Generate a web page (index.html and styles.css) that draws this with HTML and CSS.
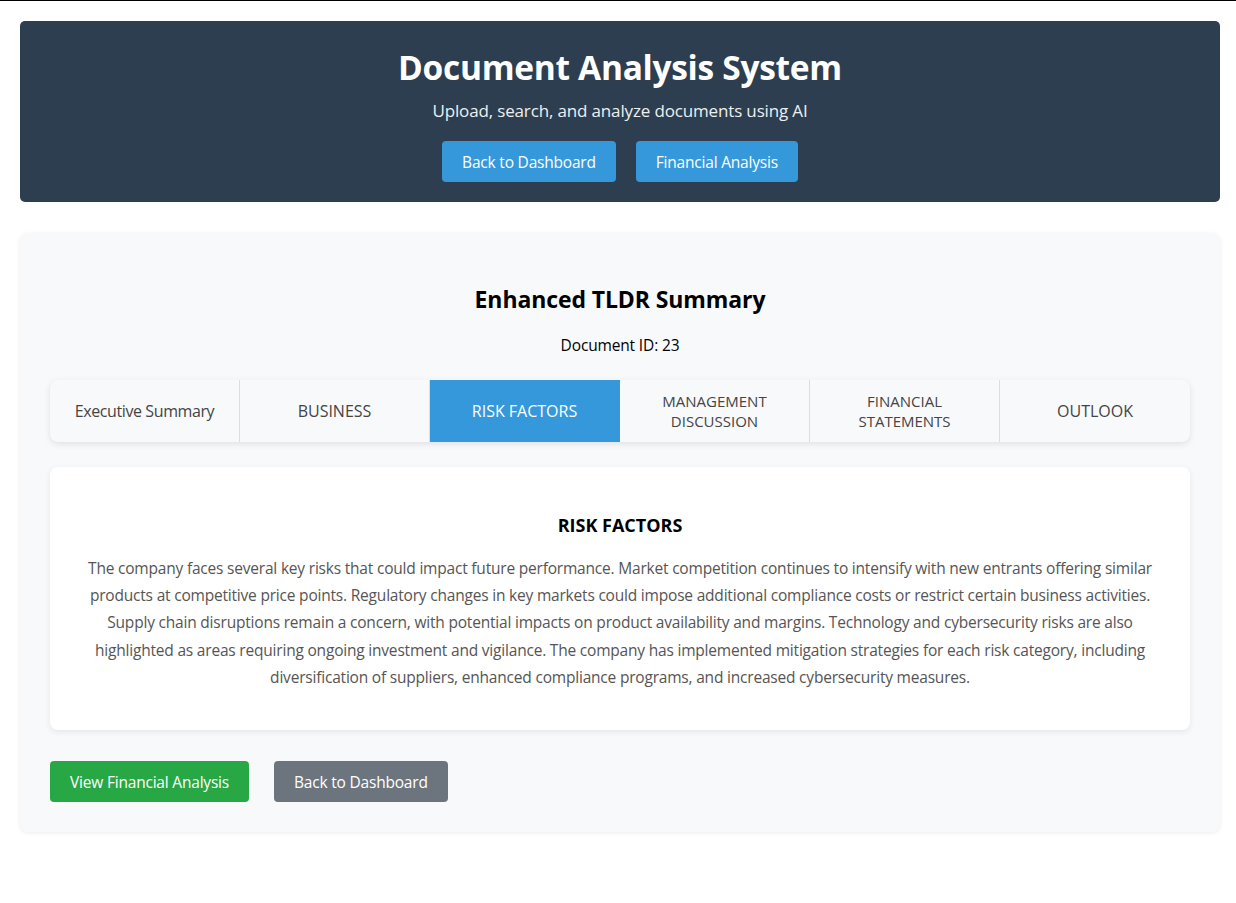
FILE: index.html
```html
<!DOCTYPE html>
<html lang="en">
<head>
<meta charset="utf-8">
<title>Document Analysis System</title>
<link rel="stylesheet" href="styles.css">
</head>
<body>
<div class="page">
  <header class="hero">
    <h1 class="hero-title">Document Analysis System</h1>
    <p class="hero-sub">Upload, search, and analyze documents using AI</p>
    <div class="hero-actions">
      <a class="btn btn-blue" href="#">Back to Dashboard</a>
      <a class="btn btn-blue" href="#">Financial Analysis</a>
    </div>
  </header>

  <main class="card">
    <h2 class="card-title">Enhanced TLDR Summary</h2>
    <p class="doc-id">Document ID: 23</p>

    <div class="tabs">
      <div class="tab">Executive Summary</div>
      <div class="tab caps">BUSINESS</div>
      <div class="tab caps active">RISK FACTORS</div>
      <div class="tab caps two-line"><span class="tab-line">MANAGEMENT</span><span class="tab-line">DISCUSSION</span></div>
      <div class="tab caps two-line"><span class="tab-line">FINANCIAL</span><span class="tab-line">STATEMENTS</span></div>
      <div class="tab caps">OUTLOOK</div>
    </div>

    <section class="panel">
      <h3 class="panel-title">RISK FACTORS</h3>
      <p class="panel-text">The company faces several key risks that could impact future performance. Market competition continues to intensify with new entrants offering similar products at competitive price points. Regulatory changes in key markets could impose additional compliance costs or restrict certain business activities. Supply chain disruptions remain a concern, with potential impacts on product availability and margins. Technology and cybersecurity risks are also highlighted as areas requiring ongoing investment and vigilance. The company has implemented mitigation strategies for each risk category, including diversification of suppliers, enhanced compliance programs, and increased cybersecurity measures.</p>
    </section>

    <div class="actions">
      <a class="btn btn-green" href="#">View Financial Analysis</a>
      <a class="btn btn-grey" href="#">Back to Dashboard</a>
    </div>
  </main>
</div>
</body>
</html>
```

FILE: styles.css
```css
* { box-sizing: border-box; }

html, body {
  margin: 0;
  padding: 0;
  background: #ffffff;
}

body {
  border-top: 1px solid #000000;
  font-family: "Open Sans", "Noto Sans", sans-serif;
  color: #000;
}

.page {
  width: 1200px;
  margin: 20px 0 40px 20px;
  display: flex;
  flex-direction: column;
  gap: 31px;
}

.hero {
  background: #2c3e50;
  border-radius: 5px;
  padding: 22px 20px 20px;
  text-align: center;
  color: #ffffff;
}

.hero-title {
  margin: 0;
  font-size: 33.5px;
  line-height: 48px;
  font-weight: 700;
  letter-spacing: -0.3px;
}

.hero-sub {
  margin: 8px 0 0;
  font-size: 17px;
  line-height: 24px;
  color: #ecf0f1;
  letter-spacing: -0.15px;
}

.hero-actions {
  margin-top: 18px;
  display: flex;
  justify-content: center;
  gap: 20px;
}

.btn {
  display: inline-flex;
  align-items: center;
  justify-content: center;
  height: 41px;
  padding: 0 20px;
  border-radius: 4px;
  color: #ffffff;
  text-decoration: none;
  font-size: 15.5px;
  letter-spacing: -0.2px;
}

.btn-blue { background: #3498db; }
.btn-green { background: #28a745; }
.btn-grey { background: #6c757d; }

.card {
  background: #f8f9fa;
  border-radius: 8px;
  box-shadow: 0 1px 4px rgba(0, 0, 0, 0.08);
  padding: 50px 30px 30px;
}

.card-title {
  margin: 0;
  text-align: center;
  font-size: 23px;
  line-height: 32px;
  font-weight: 700;
  letter-spacing: -0.1px;
}

.doc-id {
  margin: 20px 0 0;
  text-align: center;
  font-size: 15.5px;
  line-height: 20px;
  letter-spacing: -0.15px;
}

.tabs {
  margin-top: 25px;
  display: grid;
  grid-template-columns: repeat(6, 1fr);
  height: 62px;
  background: #f8f9fa;
  border-radius: 8px;
  overflow: hidden;
  box-shadow: 0 2px 6px rgba(0, 0, 0, 0.1);
}

.tab {
  display: flex;
  flex-direction: column;
  align-items: center;
  justify-content: center;
  text-align: center;
  font-size: 16px;
  line-height: 19px;
  color: #444444;
  border-right: 1px solid #dddddd;
  letter-spacing: -0.4px;
}

.tab.caps { letter-spacing: 0; }

.tab.two-line { font-size: 15px; }

.tab-line {
  display: block;
  line-height: 20.5px;
}

.tab:last-child { border-right: none; }

.tab.active {
  background: #3498db;
  color: #ffffff;
  border-right-color: #3498db;
}

.panel {
  margin-top: 25px;
  background: #ffffff;
  border-radius: 8px;
  box-shadow: 0 2px 6px rgba(0, 0, 0, 0.08);
  padding: 46px 30px 39px;
  text-align: center;
}

.panel-title {
  margin: 0;
  font-size: 18px;
  line-height: 24px;
  font-weight: 700;
}

.panel-text {
  margin: 18px 0 0;
  font-size: 15.5px;
  line-height: 27.2px;
  color: #555555;
  letter-spacing: -0.2px;
}

.actions {
  margin-top: 31px;
  display: flex;
  gap: 25px;
}
```
